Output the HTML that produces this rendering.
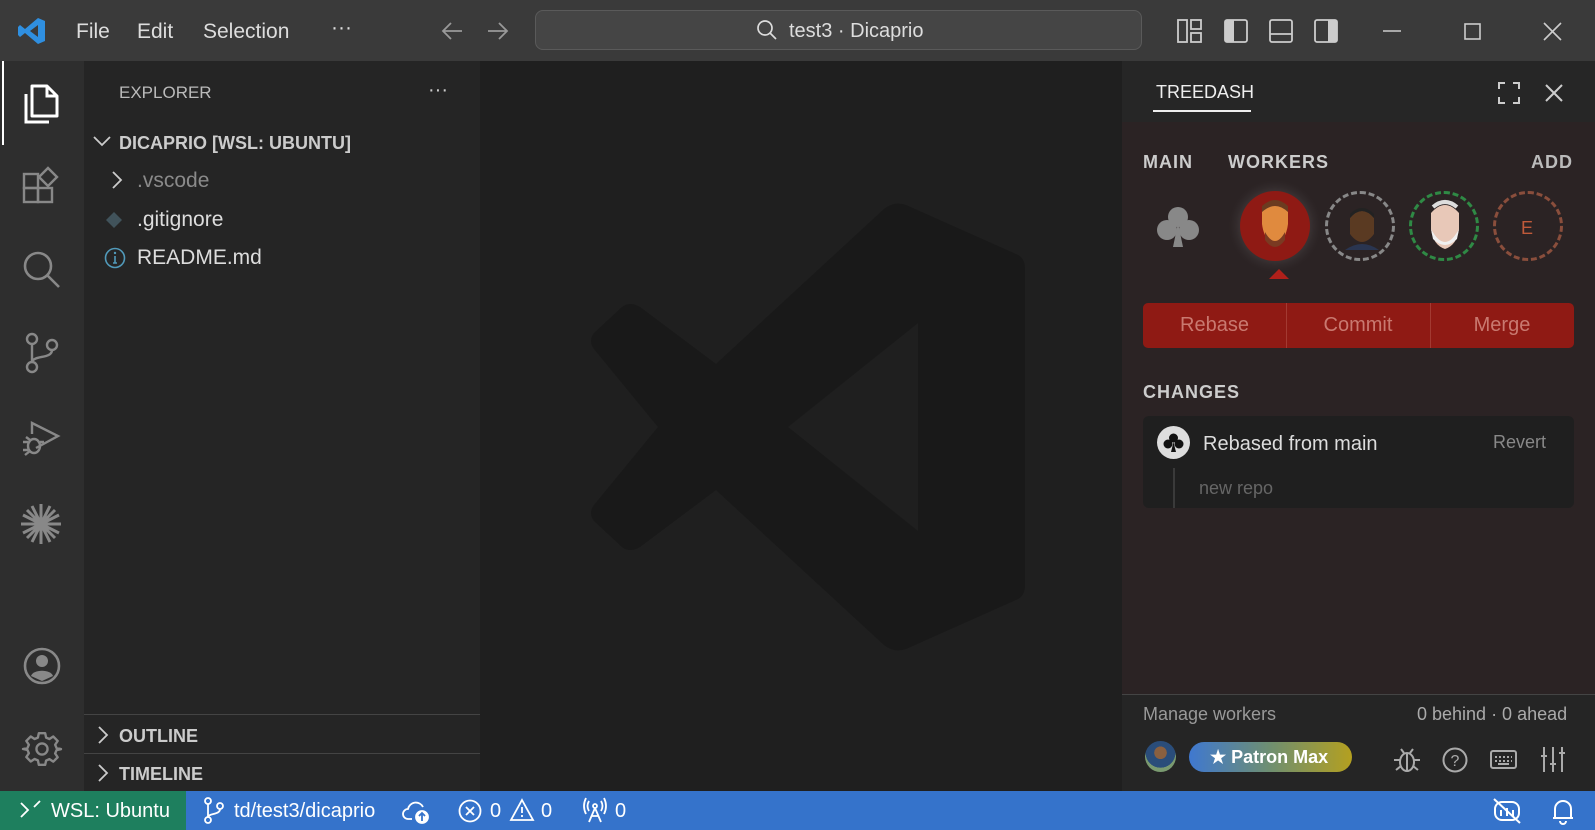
<!DOCTYPE html>
<html><head><meta charset="utf-8"><style>
*{margin:0;padding:0;box-sizing:border-box}
body{width:1595px;height:830px;overflow:hidden;background:#1f1f1f;font-family:"Liberation Sans",sans-serif;position:relative;color:#ccc}
.a{position:absolute}
.t{position:absolute;white-space:nowrap;line-height:1}
svg{position:absolute;overflow:visible}
</style></head><body>
<!-- title bar -->
<div class="a" style="left:0;top:0;width:1595px;height:61px;background:#3a3a3a"></div>
<svg style="left:17px;top:16px" width="30" height="30" viewBox="0 0 30 30"><path d="M21 2 L28 5 V25 L21 28 L8 17 L3 21 L1 19 V11 L3 9 L8 13 Z M21 9 L13 15 L21 21 Z" fill="#2f8fe0"/></svg>
<div class="t" style="left:76px;top:21px;font-size:21px;color:#ddd">File</div>
<div class="t" style="left:137px;top:21px;font-size:21px;color:#ddd">Edit</div>
<div class="t" style="left:203px;top:21px;font-size:21px;color:#ddd">Selection</div>
<div class="t" style="left:331px;top:17px;font-size:21px;color:#ddd">···</div>
<svg style="left:440px;top:21px" width="24" height="20"><path d="M22 10H3M11 2L3 10L11 18" stroke="#999" stroke-width="1.8" fill="none"/></svg>
<svg style="left:486px;top:21px" width="24" height="20"><path d="M2 10H21M13 2L21 10L13 18" stroke="#999" stroke-width="1.8" fill="none"/></svg>
<div class="a" style="left:535px;top:10px;width:607px;height:40px;border:1px solid #5a5a5a;border-radius:8px;background:#454545"></div>
<svg style="left:756px;top:19px" width="22" height="22"><circle cx="9" cy="9" r="7" stroke="#ddd" stroke-width="1.7" fill="none"/><path d="M14 14L20 20" stroke="#ddd" stroke-width="1.7"/></svg>
<div class="t" style="left:789px;top:21px;font-size:20px;color:#ddd">test3 · Dicaprio</div>
<svg style="left:1177px;top:19px" width="26" height="24"><rect x="1" y="1" width="9" height="22" fill="none" stroke="#ccc" stroke-width="1.8"/><rect x="14" y="1" width="10" height="9" fill="none" stroke="#ccc" stroke-width="1.8"/><rect x="14" y="14" width="10" height="9" fill="none" stroke="#ccc" stroke-width="1.8"/></svg>
<svg style="left:1224px;top:19px" width="24" height="24"><rect x="1" y="1" width="22" height="22" rx="2" fill="none" stroke="#ccc" stroke-width="1.8"/><rect x="1" y="1" width="9" height="22" fill="#ccc"/></svg>
<svg style="left:1269px;top:19px" width="24" height="24"><rect x="1" y="1" width="22" height="22" rx="2" fill="none" stroke="#ccc" stroke-width="1.8"/><path d="M1 15H23" stroke="#ccc" stroke-width="1.8"/></svg>
<svg style="left:1314px;top:19px" width="24" height="24"><rect x="1" y="1" width="22" height="22" rx="2" fill="none" stroke="#ccc" stroke-width="1.8"/><rect x="14" y="1" width="9" height="22" fill="#ccc"/></svg>
<svg style="left:1383px;top:30px" width="20" height="4"><path d="M0 1H18" stroke="#ccc" stroke-width="1.6"/></svg>
<svg style="left:1464px;top:23px" width="18" height="18"><rect x="1" y="1" width="15" height="15" fill="none" stroke="#ccc" stroke-width="1.6"/></svg>
<svg style="left:1543px;top:22px" width="20" height="20"><path d="M1 1L18 18M18 1L1 18" stroke="#ccc" stroke-width="1.6"/></svg>
<!-- activity bar -->
<div class="a" style="left:0;top:61px;width:84px;height:730px;background:#2e2e2e"></div>
<div class="a" style="left:2px;top:61px;width:2px;height:84px;background:#fff"></div>
<svg style="left:23px;top:82px" width="36" height="42"><path d="M9 4H24L34 14V34H9Z" fill="none" stroke="#fff" stroke-width="3" stroke-linejoin="round"/><path d="M24 4V14H34" fill="none" stroke="#fff" stroke-width="3"/><path d="M3 12V40H26" fill="none" stroke="#fff" stroke-width="3"/></svg>
<svg style="left:23px;top:167px" width="38" height="38" stroke="#888" stroke-width="2.4" fill="none"><rect x="1" y="7" width="14" height="14"/><rect x="1" y="21" width="14" height="14"/><rect x="15" y="21" width="14" height="14"/><path d="M25 1L34 10L25 19L16 10Z"/></svg>
<svg style="left:22px;top:250px" width="40" height="40" stroke="#888" stroke-width="2.6" fill="none"><circle cx="16" cy="16" r="13"/><path d="M25 25L37 37"/></svg>
<svg style="left:24px;top:333px" width="36" height="42" stroke="#888" stroke-width="2.4" fill="none"><circle cx="8" cy="6" r="5"/><circle cx="8" cy="34" r="5"/><circle cx="28" cy="12" r="5"/><path d="M8 11V29M28 17C28 26 10 22 8 29"/></svg>
<svg style="left:20px;top:420px" width="40" height="40" stroke="#888" stroke-width="2.4" fill="none"><path d="M12 14V3L38 16L16 28"/><ellipse cx="14" cy="26" rx="6" ry="7"/><path d="M3 22H8M3 30H8M20 22H24M6 17L10 20M5 35L10 31"/></svg>
<svg style="left:19px;top:502px" width="44" height="44" stroke="#888" stroke-width="3"><path d="M22 2V42M2 22H42M8 8L36 36M36 8L8 36M13 4L31 40M31 4L13 40M4 13L40 31M40 13L4 31"/></svg>
<svg style="left:23px;top:647px" width="38" height="38"><circle cx="19" cy="19" r="17" fill="none" stroke="#888" stroke-width="2.6"/><circle cx="19" cy="14" r="6" fill="#888"/><path d="M8 29C10 22 28 22 30 29L19 34Z" fill="#888"/></svg>
<svg style="left:23px;top:730px" width="38" height="38" viewBox="0 0 24 24"><path d="M10 2h4l.6 2.8 2.1.9 2.4-1.6 2.8 2.8-1.6 2.4.9 2.1L24 12v.1l-2.8.6-.9 2.1 1.6 2.4-2.8 2.8-2.4-1.6-2.1.9L14 22h-4l-.6-2.8-2.1-.9-2.4 1.6-2.8-2.8 1.6-2.4-.9-2.1L0 12v0l2.8-.6.9-2.1L2.1 6.9 4.9 4.1l2.4 1.6 2.1-.9Z" fill="none" stroke="#888" stroke-width="1.5" stroke-linejoin="round"/><circle cx="12" cy="12" r="3.5" fill="none" stroke="#888" stroke-width="1.5"/></svg>
<!-- sidebar -->
<div class="a" style="left:84px;top:61px;width:396px;height:730px;background:#252525"></div>
<div class="t" style="left:119px;top:84px;font-size:17px;color:#bbb">EXPLORER</div>
<div class="t" style="left:428px;top:80px;font-size:20px;color:#ccc">···</div>
<svg style="left:93px;top:136px" width="18" height="12"><path d="M1 1L9 9L17 1" stroke="#ccc" stroke-width="1.8" fill="none"/></svg>
<div class="t" style="left:119px;top:134px;font-size:18px;font-weight:bold;color:#ccc">DICAPRIO [WSL: UBUNTU]</div>
<svg style="left:111px;top:171px" width="12" height="20"><path d="M2 1L10 9L2 17" stroke="#ccc" stroke-width="1.8" fill="none"/></svg>
<div class="t" style="left:137px;top:170px;font-size:21px;color:#8a8a8a">.vscode</div>
<svg style="left:105px;top:211px" width="18" height="18"><path d="M9 1L17 9L9 17L1 9Z" fill="#41535b"/></svg>
<div class="t" style="left:137px;top:209px;font-size:21px;color:#ddd">.gitignore</div>
<svg style="left:104px;top:247px" width="22" height="22"><circle cx="11" cy="11" r="9.5" fill="none" stroke="#519aba" stroke-width="1.6"/><path d="M11 9V16M9 16H13" stroke="#519aba" stroke-width="1.6"/><circle cx="11" cy="6" r="1.2" fill="#519aba"/></svg>
<div class="t" style="left:137px;top:247px;font-size:21px;color:#ddd">README.md</div>
<div class="a" style="left:84px;top:714px;width:396px;height:1px;background:#444"></div>
<svg style="left:97px;top:726px" width="12" height="20"><path d="M2 1L10 9L2 17" stroke="#ccc" stroke-width="1.8" fill="none"/></svg>
<div class="t" style="left:119px;top:727px;font-size:18px;font-weight:bold;color:#ccc">OUTLINE</div>
<div class="a" style="left:84px;top:753px;width:396px;height:1px;background:#444"></div>
<svg style="left:97px;top:764px" width="12" height="20"><path d="M2 1L10 9L2 17" stroke="#ccc" stroke-width="1.8" fill="none"/></svg>
<div class="t" style="left:119px;top:765px;font-size:18px;font-weight:bold;color:#ccc">TIMELINE</div>
<!-- editor watermark -->
<svg style="left:588px;top:203px" width="440" height="448" viewBox="0 0 440 448"><path d="M318 2 L430 52 Q437 56 437 66 V382 Q437 392 430 396 L318 446 Q306 450 296 442 L128 287 L52 344 Q42 350 34 344 L6 318 Q0 310 6 302 L70 224 L6 146 Q0 138 6 130 L34 104 Q42 98 52 104 L128 161 L296 6 Q306 -2 318 2 Z M330 120 L200 224 L330 328 Z" fill="#191919"/></svg>
<!-- panel -->
<div class="a" style="left:1122px;top:61px;width:473px;height:61px;background:#262626"></div>
<div class="t" style="left:1156px;top:83px;font-size:18px;color:#eee">TREEDASH</div>
<div class="a" style="left:1153px;top:110px;width:98px;height:2px;background:#eee"></div>
<svg style="left:1498px;top:82px" width="22" height="22" stroke="#ccc" stroke-width="2" fill="none"><path d="M1 7V1H7M15 1H21V7M21 15V21H15M7 21H1V15"/></svg>
<svg style="left:1545px;top:84px" width="18" height="18" stroke="#ccc" stroke-width="2"><path d="M1 1L17 17M17 1L1 17"/></svg>
<div class="a" style="left:1122px;top:122px;width:473px;height:573px;background:#2b2324"></div>
<div class="t" style="left:1143px;top:153px;font-size:18px;font-weight:bold;color:#ccc;letter-spacing:1px">MAIN</div>
<div class="t" style="left:1228px;top:153px;font-size:18px;font-weight:bold;color:#ccc;letter-spacing:1px">WORKERS</div>
<div class="t" style="left:1531px;top:153px;font-size:18px;font-weight:bold;color:#bbb;letter-spacing:1px">ADD</div>
<svg style="left:1156px;top:205px" width="44" height="44"><circle cx="22" cy="12" r="10" fill="#888"/><circle cx="11" cy="25" r="10" fill="#888"/><circle cx="33" cy="25" r="10" fill="#888"/><path d="M22 18L17 42H27Z" fill="#888"/></svg>
<div class="a" style="left:1240px;top:191px;width:70px;height:70px;border-radius:50%;background:#8f1a14;box-shadow:0 0 14px rgba(255,255,255,.15)"></div>
<svg style="left:1258px;top:198px" width="34" height="56"><path d="M4 12Q17 -2 30 12L30 26Q28 42 17 48Q6 42 4 26Z" fill="#e08a3e"/><path d="M4 14Q17 2 30 14L30 8Q17 -4 4 8Z" fill="#6b3b20"/><path d="M7 34Q17 52 27 34L27 42Q17 56 7 42Z" fill="#7a3a22"/></svg>
<div class="a" style="left:1269px;top:269px;width:0;height:0;border-left:10px solid transparent;border-right:10px solid transparent;border-bottom:10px solid #b0201a"></div>
<div class="a" style="left:1325px;top:191px;width:70px;height:70px;border-radius:50%;border:3px dashed #888"></div>
<svg style="left:1345px;top:204px" width="34" height="46"><path d="M5 14Q17 0 29 14V30Q17 46 5 30Z" fill="#5a3a22"/><path d="M5 14Q17 0 29 14V10Q17 -2 5 10Z" fill="#222"/><path d="M0 46Q17 34 34 46Z" fill="#2a3550"/></svg>
<div class="a" style="left:1409px;top:191px;width:70px;height:70px;border-radius:50%;border:3px dashed #2f8a45"></div>
<svg style="left:1427px;top:199px" width="36" height="52"><path d="M4 14Q18 -2 32 14V30Q30 46 18 50Q6 46 4 30Z" fill="#e8c8b8"/><path d="M4 30Q18 56 32 30L30 40Q18 52 6 40Z" fill="#f0f0f0"/><path d="M6 8Q18 -2 30 8" stroke="#ddd" stroke-width="4" fill="none"/></svg>
<div class="a" style="left:1493px;top:191px;width:70px;height:70px;border-radius:50%;border:3px dashed #8a4e3c"></div>
<div class="t" style="left:1521px;top:219px;font-size:18px;color:#c05a3a">E</div>
<div class="a" style="left:1143px;top:303px;width:431px;height:45px;border-radius:5px;background:#8f1a14"></div>
<div class="a" style="left:1286px;top:303px;width:1px;height:45px;background:#a33a32"></div>
<div class="a" style="left:1430px;top:303px;width:1px;height:45px;background:#a33a32"></div>
<div class="t" style="left:1143px;top:315px;width:143px;text-align:center;font-size:20px;color:#c97970">Rebase</div>
<div class="t" style="left:1286px;top:315px;width:144px;text-align:center;font-size:20px;color:#c97970">Commit</div>
<div class="t" style="left:1430px;top:315px;width:144px;text-align:center;font-size:20px;color:#c97970">Merge</div>
<div class="t" style="left:1143px;top:383px;font-size:18px;font-weight:bold;color:#ccc;letter-spacing:1px">CHANGES</div>
<div class="a" style="left:1143px;top:416px;width:431px;height:92px;border-radius:6px;background:#1f1f1f"></div>
<div class="a" style="left:1157px;top:426px;width:33px;height:33px;border-radius:50%;background:#ddd"></div>
<svg style="left:1162px;top:431px" width="23" height="23"><circle cx="11.5" cy="7" r="4.5" fill="#111"/><circle cx="6" cy="13" r="4.5" fill="#111"/><circle cx="17" cy="13" r="4.5" fill="#111"/><path d="M11.5 11L9 21H14Z" fill="#111"/></svg>
<div class="t" style="left:1203px;top:434px;font-size:20px;color:#ddd">Rebased from main</div>
<div class="t" style="left:1493px;top:433px;font-size:18px;color:#888">Revert</div>
<div class="a" style="left:1173px;top:468px;width:2px;height:40px;background:#3a3a3a"></div>
<div class="t" style="left:1199px;top:479px;font-size:18px;color:#666">new repo</div>
<div class="a" style="left:1122px;top:694px;width:473px;height:97px;background:#252525;border-top:1px solid #444"></div>
<div class="t" style="left:1143px;top:705px;font-size:18px;color:#999">Manage workers</div>
<div class="t" style="left:1417px;top:705px;font-size:18px;color:#aaa">0 behind · 0 ahead</div>
<div class="a" style="left:1145px;top:741px;width:31px;height:31px;border-radius:50%;background:radial-gradient(circle at 50% 38%,#8a6040 0 25%,#2a4d7a 26% 60%,#7a9a70 61%)"></div>
<div class="a" style="left:1189px;top:742px;width:163px;height:30px;border-radius:15px;background:linear-gradient(90deg,#3f78d0,#6f8f70,#b4a020)"></div>
<div class="t" style="left:1210px;top:748px;font-size:18px;font-weight:bold;color:#fff">★ Patron Max</div>
<svg style="left:1393px;top:746px" width="28" height="28" stroke="#aaa" stroke-width="2" fill="none"><ellipse cx="14" cy="16" rx="7" ry="9"/><path d="M14 8V25M1 14H7M21 14H27M3 24L8 20M25 24L20 20M8 3L11 7M20 3L17 7"/></svg>
<svg style="left:1442px;top:747px" width="26" height="26"><circle cx="13" cy="13" r="11.5" fill="none" stroke="#aaa" stroke-width="2"/><text x="13" y="19" font-size="16" text-anchor="middle" fill="#aaa" font-family="Liberation Sans">?</text></svg>
<svg style="left:1490px;top:750px" width="28" height="20" stroke="#aaa" stroke-width="2" fill="none"><rect x="1" y="1" width="25" height="17" rx="2"/><path d="M5 7H22M5 11H22" stroke-dasharray="2 2"/><path d="M8 14H19"/></svg>
<svg style="left:1540px;top:746px" width="26" height="28" stroke="#aaa" stroke-width="2"><path d="M4 1V26M13 1V26M22 1V26M1 10H7M10 18H16M19 7H25"/></svg>
<!-- status bar -->
<div class="a" style="left:0;top:791px;width:1595px;height:39px;background:#3573cb"></div>
<div class="a" style="left:0;top:791px;width:186px;height:39px;background:#1e7f5e"></div>
<svg style="left:20px;top:800px" width="22" height="20" stroke="#fff" stroke-width="1.8" fill="none"><path d="M1 3L8 10L1 17M20 1L14 7"/></svg>
<div class="t" style="left:51px;top:801px;font-size:20px;color:#fff">WSL: Ubuntu</div>
<svg style="left:203px;top:797px" width="22" height="28" stroke="#fff" stroke-width="1.8" fill="none"><circle cx="5" cy="4" r="3"/><circle cx="5" cy="23" r="3"/><circle cx="17" cy="9" r="3"/><path d="M5 7V20M17 12C17 18 6 16 5 20"/></svg>
<div class="t" style="left:234px;top:801px;font-size:20px;color:#fff">td/test3/dicaprio</div>
<svg style="left:402px;top:799px" width="30" height="26" stroke="#fff" stroke-width="1.8" fill="none"><path d="M10 20H6A5 5 0 0 1 6 10A8 8 0 0 1 21 8"/><circle cx="20" cy="18" r="6" fill="#fff"/><path d="M20 22V15M17 17L20 14L23 17" stroke="#3573cb"/></svg>
<svg style="left:458px;top:799px" width="24" height="24" stroke="#fff" stroke-width="1.8" fill="none"><circle cx="12" cy="12" r="10.5"/><path d="M8 8L16 16M16 8L8 16"/></svg>
<div class="t" style="left:490px;top:801px;font-size:20px;color:#fff">0</div>
<svg style="left:509px;top:798px" width="26" height="24" stroke="#fff" stroke-width="1.8" fill="none"><path d="M13 2L24 22H2Z"/><path d="M13 9V15M13 17V19"/></svg>
<div class="t" style="left:541px;top:801px;font-size:20px;color:#fff">0</div>
<svg style="left:582px;top:797px" width="26" height="26" stroke="#fff" stroke-width="1.8" fill="none"><circle cx="13" cy="9" r="2"/><path d="M13 11L7 25M13 11L19 25M9 19H17M7 4Q4 9 7 14M19 4Q22 9 19 14M4 1Q0 9 4 17M22 1Q26 9 22 17"/></svg>
<div class="t" style="left:615px;top:801px;font-size:20px;color:#fff">0</div>
<svg style="left:1492px;top:797px" width="30" height="28" stroke="#fff" stroke-width="2" fill="none"><rect x="3" y="5" width="24" height="18" rx="7"/><path d="M9 13V19M15 11V19M21 13V19"/><path d="M2 2L28 26"/></svg>
<svg style="left:1551px;top:797px" width="24" height="28" stroke="#fff" stroke-width="2" fill="none"><path d="M4 21V12A8 8 0 0 1 20 12V21H2H22M9 24A3 3 0 0 0 15 24"/></svg>
</body></html>
